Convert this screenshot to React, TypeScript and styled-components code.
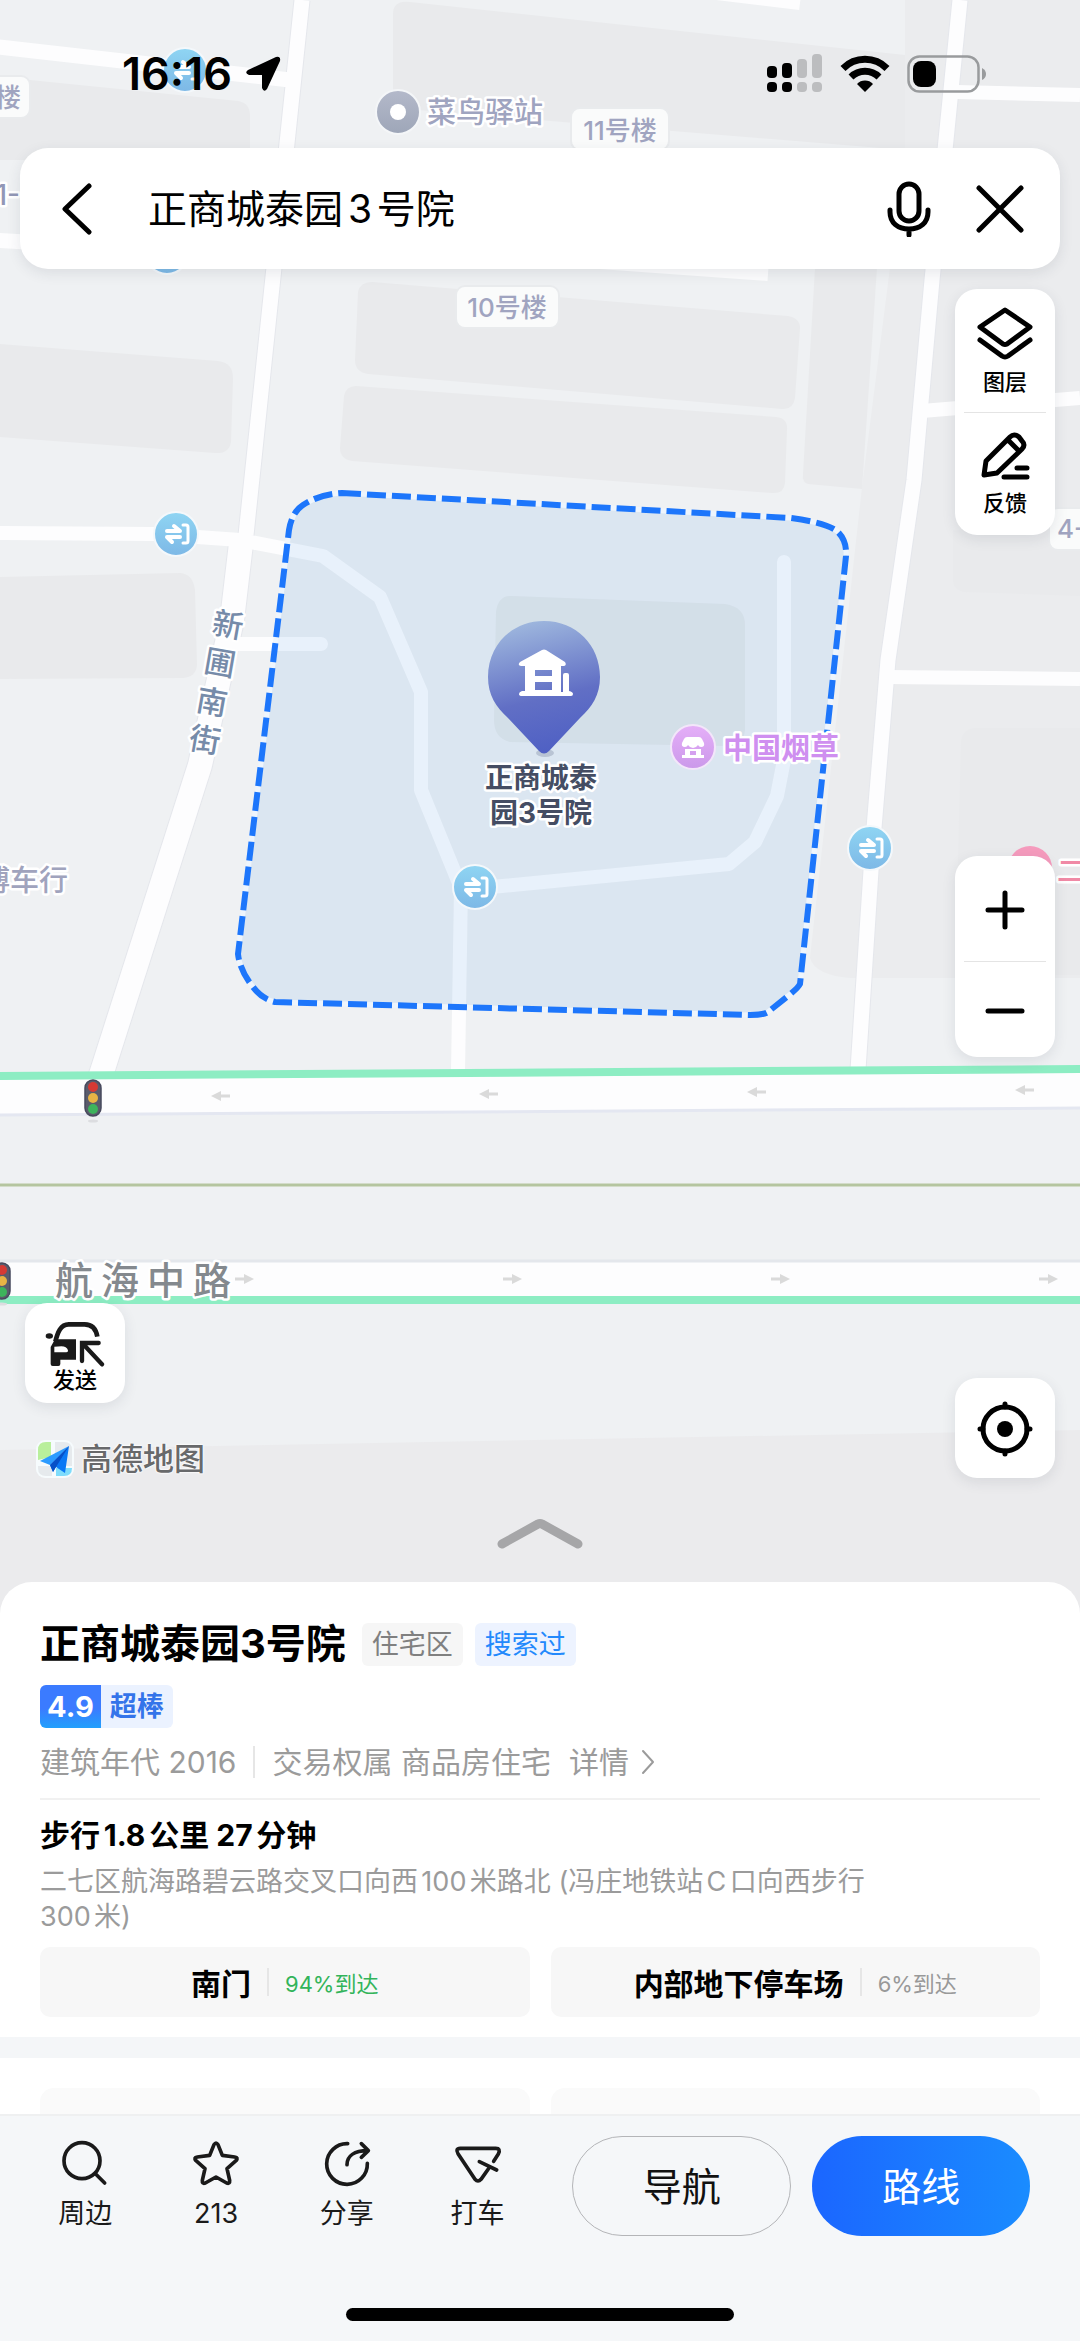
import React from "react";
import styled, { createGlobalStyle, css } from "styled-components";

const sans = `Inter, "Noto Sans CJK SC", "Liberation Sans", sans-serif`;

const GlobalStyle = createGlobalStyle`
  * { box-sizing: border-box; }
  body {
    margin: 0;
    font-family: ${sans};
    color: #000;
    background: #f5f7f9;
    text-autospace: normal;
  }
  button, input { font: inherit; color: inherit; }
`;

const Screen = styled.div`
  display: flex;
  flex-direction: column;
  min-height: 100vh;
`;

/* ---------- map ---------- */

const MapArea = styled.section`
  position: relative;
  flex: 1;
  display: flex;
  flex-direction: column;
  padding-bottom: 32px;
  overflow: hidden;
  background: #eff1f3;
`;

const MapCanvas = styled.svg`
  position: absolute;
  inset: 0;
  width: 100%;
  height: 100%;
  font-family: ${sans};
  text-autospace: no-autospace;
`;

const Overlay = styled.div`
  position: relative;
  flex: 1;
  display: flex;
  flex-direction: column;
`;

const MapLabel = styled.text<{ $color: string; $size?: number; $weight?: number }>`
  fill: ${(p) => p.$color};
  font-size: ${(p) => p.$size ?? 28}px;
  font-weight: ${(p) => p.$weight ?? 500};
  paint-order: stroke;
  stroke: #fff;
  stroke-width: 5px;
  stroke-linejoin: round;
`;

const ChipLabel = styled.text`
  fill: #a0a4c0;
  font-size: 26px;
  font-weight: 500;
`;

const Gate = ({ x, y }: { x: number; y: number }) => (
  <g transform={`translate(${x} ${y})`}>
    <circle r="22" fill="url(#gate)" stroke="#f4f8fb" strokeWidth="2" />
    <g fill="none" stroke="#fff" strokeWidth="4" strokeLinecap="round" strokeLinejoin="round">
      <path d="M-9 -3H4L-2 -8M4 3H-9L-4 8" />
      <path d="M7 -9H10Q12 -9 12 -7V7Q12 9 10 9H7" strokeWidth="3" />
    </g>
  </g>
);

const Arrow = ({ x, y, flip }: { x: number; y: number; flip?: boolean }) => (
  <g transform={`translate(${x} ${y}) scale(${flip ? -1 : 1} 1)`} fill="#dadada">
    <rect x="-9" y="-1.5" width="12" height="3" />
    <path d="M0 -5L10 0L0 5Z" />
  </g>
);

const TrafficLight = ({ x, y }: { x: number; y: number }) => (
  <g transform={`translate(${x} ${y})`}>
    <ellipse cy="23" rx="5" ry="1.5" fill="#dcdde0" />
    <rect x="-8" y="-18" width="16" height="36" rx="8" fill="#5a5c6c" stroke="#47495d" strokeWidth="1.5" />
    <circle cy="-11" r="5" fill="#d63a34" />
    <circle r="5" fill="#e8b445" />
    <circle cy="11" r="5" fill="#3db35c" />
  </g>
);

const Chip = ({ x, y, w }: { x: number; y: number; w: number }) => (
  <rect x={x} y={y} width={w} height="42" rx="9" fill="#fafbfb" stroke="#e9ebed" strokeWidth="2" />
);

const area =
  "M342 493L791 518Q828 523 838 532Q847 541 846 556L800 984Q798 988 788 996L768 1012Q764 1015 750 1015L275 1002Q262 999 253 987Q240 971 238 954L289 530Q292 512 303 505Q320 494 342 493Z";

function CityMap() {
  return (
    <MapCanvas viewBox="0 0 1080 1614" preserveAspectRatio="xMidYMid slice" role="img" aria-label="地图">
      <defs>
        <linearGradient id="gate" x1="0" y1="0" x2="0" y2="1">
          <stop offset="0" stopColor="#8fd5f3" />
          <stop offset="1" stopColor="#7db8e6" />
        </linearGradient>
        <linearGradient id="pin" x1="0.3" y1="0" x2="0.5" y2="1">
          <stop offset="0" stopColor="#9fb8de" />
          <stop offset="0.6" stopColor="#616fc5" />
          <stop offset="1" stopColor="#4f60c4" />
        </linearGradient>
        <linearGradient id="shop" x1="0" y1="0" x2="0" y2="1">
          <stop offset="0" stopColor="#e5aff8" />
          <stop offset="1" stopColor="#cb98ea" />
        </linearGradient>
        <linearGradient id="grey" x1="0" y1="0" x2="0" y2="1">
          <stop offset="0" stopColor="#b4b9ca" />
          <stop offset="1" stopColor="#9ea6b8" />
        </linearGradient>
      </defs>

      {/* land */}
      <rect width="1080" height="1614" fill="#eff1f3" />
      <path d="M905 0H1080V978H850Q815 975 810 958L862 487L905 150Z" fill="#ebecee" />
      <path d="M0 1450L1080 1430V1614H0Z" fill="#ebebed" />

      {/* buildings */}
      <g fill="#e9eaec">
        <path d="M393 14Q393 0 410 2L905 55V150L393 108Z" />
        <path d="M0 77L238 101Q250 103 250 116V160H0Z" />
        <path d="M0 344L218 361Q233 363 233 378L231 442Q229 454 215 453L0 437Z" />
        <path d="M0 577L180 573Q193 574 195 590L197 665Q196 677 183 678L0 679Z" />
        <path d="M358 292Q360 282 372 282L788 316Q800 318 800 328L795 398Q793 410 782 409L368 374Q355 372 355 360Z" />
        <path d="M344 396Q346 386 356 386L776 417Q788 418 787 430L785 483Q784 494 772 493L352 461Q340 459 340 448Z" />
        <path d="M815 268H877L862 489L808 484Q802 482 803 474Z" />
        <path d="M953 530H1080V596L965 592Q953 590 953 580ZM975 728H1080V975H955L961 742Q962 729 975 728Z" />
        <path d="M496 612Q498 595 512 596L725 604Q745 607 745 625V730Q743 747 728 746L510 742Q494 738 494 720Z" fill="#e6e9ea" />
      </g>

      {/* streets */}
      <g fill="none" strokeLinejoin="round">
        <g stroke="#e5e7ec">
          <path d="M302 0L246 535" strokeWidth="17" />
          <path d="M242 535L232 620L200 765L100 1078" strokeWidth="26" />
          <path d="M960 0L932 280L914 480L888 660L873 840L858 1070" strokeWidth="17" />
        </g>
        <g stroke="#fdfdfe">
          <path d="M-10 46L290 80M-10 240L200 252" strokeWidth="15" />
          <path d="M700 -9L800 3M600 262L768 274" strokeWidth="14" />
          <path d="M302 0L246 535" strokeWidth="15" />
          <path d="M242 535L232 620L200 765L100 1078" strokeWidth="24" />
          <path d="M960 0L932 280L914 480L888 660L873 840L858 1070" strokeWidth="15" />
          <path d="M957 92L1080 95M922 411L1080 398M886 677L1080 679" strokeWidth="14" />
          <path d="M0 533L155 534L240 540L323 556L380 597L421 692V790L461 888L458 1072" strokeWidth="14" />
          <path d="M461 890L729 864L755 842L777 796L784 760V562M228 644H321" strokeWidth="14" strokeLinecap="round" />
        </g>
      </g>

      {/* community boundary */}
      <path d={area} fill="rgba(20,120,225,0.09)" />
      <path d={area} fill="none" stroke="#eef5fd" strokeWidth="5" />
      <path d={area} fill="none" stroke="#1d76fb" strokeWidth="6" strokeDasharray="19 6" />

      {/* main road */}
      <path d="M0 1114L1080 1108V1073L0 1079Z" fill="#fdfdfe" />
      <path d="M0 1115L1080 1108" stroke="#e4e7f1" strokeWidth="3" />
      <path d="M0 1076L1080 1069" stroke="#8dedc3" strokeWidth="8" />
      <path d="M0 1185H1080" stroke="#d3dcc9" strokeWidth="4" />
      <path d="M0 1185H1080" stroke="#b5c59f" strokeWidth="2" />
      <rect y="1262" width="1080" height="35" fill="#fdfdfe" />
      <path d="M0 1261H1080" stroke="#e4e7ec" strokeWidth="3" />
      <path d="M0 1300H1080" stroke="#8dedc3" strokeWidth="8" />
      {[221, 489, 757, 1025].map((x, i) => (
        <Arrow key={x} x={x} y={1096 - i * 2} flip />
      ))}
      {[244, 512, 780, 1048].map((x) => (
        <Arrow key={x} x={x} y={1279} />
      ))}
      <TrafficLight x={93} y={1098} />
      <TrafficLight x={2} y={1281} />

      <Gate x={185} y={70} />
      <Gate x={167} y={252} />
      <Gate x={176} y={534} />
      <Gate x={475} y={887} />
      <Gate x={870} y={848} />

      {/* points of interest */}
      <circle cx="398" cy="112" r="22" fill="url(#grey)" stroke="#f4f6f8" strokeWidth="2" />
      <circle cx="398" cy="112" r="8" fill="#fff" />
      <MapLabel x="427" y="123" $color="#9fa4c0" $size={29}>菜鸟驿站</MapLabel>
      <Chip x={571} y={108} w={98} />
      <ChipLabel x="620" y="140" textAnchor="middle">11号楼</ChipLabel>
      <Chip x={456} y={286} w={103} />
      <ChipLabel x="507" y="317" textAnchor="middle">10号楼</ChipLabel>
      <Chip x={-20} y={76} w={50} />
      <ChipLabel x="21" y="107" textAnchor="end">楼</ChipLabel>
      <MapLabel x="20" y="205" textAnchor="end" $color="#9297b6">1-</MapLabel>
      <Chip x={1049} y={508} w={60} />
      <ChipLabel x="1057" y="538">4-</ChipLabel>
      <circle cx="1030" cy="868" r="22" fill="#f59bbd" />
      <MapLabel x="1057" y="881" $color="#f08aa6">二七</MapLabel>
      <MapLabel x="68" y="891" textAnchor="end" $color="#a0a3bd" $size={29}>博车行</MapLabel>

      <circle cx="693" cy="747" r="22" fill="url(#shop)" stroke="#f3e6fa" strokeWidth="2" />
      <g fill="#fff">
        <path d="M687 737H699Q701 737 702 739L704 743Q705 747 701 747Q699 747 698 745Q696 748 693 748T688 745Q687 747 685 747Q681 747 682 743L684 739Q685 737 687 737Z" />
        <path d="M685 749H701V755H704V758H682V755H685ZM690 751V755H696V751Z" fillRule="evenodd" />
      </g>
      <MapLabel x="723" y="759" $color="#cf8ff0" $weight={700} $size={29}>中国烟草</MapLabel>

      <ellipse cx="545" cy="753" rx="9" ry="4" fill="#b9c4d4" />
      <path
        d="M544 621C576 621 600 645 600 677C600 695 592 707 580 718L549 751Q544 756 539 751L508 718C496 707 488 695 488 677C488 645 512 621 544 621Z"
        fill="url(#pin)"
      />
      <path
        d="M542 650Q544 649 546 650L565 662Q567 665 564 666H561V692H563V675Q563 673 565 673H567Q569 673 569 675V691Q573 692 573 694T571 696H522Q519 696 519 694T522 691H525V666H521Q517 665 520 662ZM535 670V676H552V670ZM535 682V690H552V682Z"
        fill="#fff"
        fillRule="evenodd"
      />
      <MapLabel x="541" y="788" textAnchor="middle" $color="#454d63" $weight={700}>正商城泰</MapLabel>
      <MapLabel x="541" y="823" textAnchor="middle" $color="#454d63" $weight={700}>园3号院</MapLabel>

      {/* road names */}
      {[
        ["新", 228, 625],
        ["圃", 220, 663],
        ["南", 212, 702],
        ["街", 205, 740],
      ].map(([c, x, y]) => (
        <g key={c} transform={`translate(${x} ${y}) rotate(10)`}>
          <MapLabel y="11" textAnchor="middle" $color="#768ba9" $size={31}>{c}</MapLabel>
        </g>
      ))}
      <MapLabel x="55 101 147 193" y="1294" $color="#84898e" $size={38}>航海中路</MapLabel>
    </MapCanvas>
  );
}

/* ---------- status bar and search ---------- */

const StatusBar = styled.div`
  display: flex;
  align-items: center;
  gap: 13px;
  height: 148px;
  padding: 0 93px 0 122px;
`;

const Clock = styled.time`
  font-size: 45px;
  font-weight: 600;
  line-height: 52px;
`;

const StatusIcons = styled.div`
  display: flex;
  align-items: center;
  gap: 17px;
  margin-left: auto;
`;

const floating = css`
  background: #fff;
  box-shadow: 0 4px 14px rgba(40, 50, 70, 0.1);
`;

const SearchBar = styled.form`
  ${floating}
  display: flex;
  align-items: center;
  height: 121px;
  margin: 0 20px;
  padding: 0 20px 0 16px;
  border-radius: 28px;
`;

const IconButton = styled.button`
  display: grid;
  place-items: center;
  width: 80px;
  height: 80px;
  flex: none;
  padding: 0;
  border: 0;
  background: none;
`;

const SearchInput = styled.input`
  flex: 1;
  min-width: 0;
  padding: 0 32px;
  border: 0;
  outline: 0;
  background: none;
  font-size: 39px;
  line-height: 56px;
`;

const SearchActions = styled.div`
  display: flex;
  gap: 11px;
`;

/* ---------- floating controls ---------- */

const Controls = styled.div`
  flex: 1;
  display: flex;
  justify-content: space-between;
  padding: 20px 25px 0;
`;

const LeftControls = styled.div`
  display: flex;
  flex-direction: column;
  justify-content: flex-end;
  gap: 37px;
`;

const RightControls = styled.div`
  display: flex;
  flex-direction: column;
  justify-content: space-between;
  gap: 40px;
`;

const ToolGroup = styled.div`
  ${floating}
  display: flex;
  flex-direction: column;
  width: 100px;
  padding: 0 9px;
  border-radius: 22px;
`;

const Tool = styled.button<{ $height: number }>`
  display: flex;
  flex-direction: column;
  align-items: center;
  justify-content: center;
  gap: 6px;
  height: ${(p) => p.$height}px;
  padding: 2px 0 0;
  border: 0;
  background: none;
  font-size: 22px;
  font-weight: 500;
  line-height: 30px;
  white-space: nowrap;
  & + & {
    border-top: 1px solid #e4e4e4;
  }
`;

const SendTool = styled(Tool)`
  gap: 0;
  padding-top: 5px;
  line-height: 24px;
`;

const Brand = styled.div`
  display: flex;
  align-items: center;
  gap: 7px;
  height: 38px;
  padding-left: 11px;
  color: #68696b;
  font-size: 31px;
  font-weight: 500;
  line-height: 38px;
  text-shadow: 0 0 2px #fff, 0 0 2px #fff, 0 0 3px #fff;
`;

const Expand = styled.button`
  display: grid;
  place-items: center;
  height: 104px;
  padding: 5px 0 0;
  border: 0;
  background: none;
`;

/* ---------- detail sheet ---------- */

const Sheet = styled.main`
  position: relative;
  margin-top: -32px;
  border-radius: 32px 32px 0 0;
  background: #fff;
`;

const Section = styled.section`
  padding: 36px 40px 20px;
`;

const TitleRow = styled.div`
  display: flex;
  align-items: center;
  gap: 12px;
  height: 52px;
`;

const Title = styled.h1`
  margin: 0 4px 0 0;
  font-size: 40px;
  font-weight: 700;
  line-height: 52px;
  text-autospace: no-autospace;
`;

const Tag = styled.span<{ $blue?: boolean }>`
  padding: 0 10px;
  border-radius: 6px;
  font-size: 27px;
  line-height: 43px;
  color: ${(p) => (p.$blue ? "#2389fc" : "#808080")};
  background: ${(p) => (p.$blue ? "#edf3ff" : "#f6f6f6")};
`;

const Rating = styled.div`
  display: inline-flex;
  margin-top: 15px;
  overflow: hidden;
  border-radius: 6px;
  background: #ebf2ff;
  font-size: 27px;
  font-weight: 700;
  line-height: 43px;
`;

const Score = styled.span`
  padding: 0 7px;
  color: #fff;
  background: linear-gradient(180deg, #3b7bff 55%, #22a0fc);
  font-size: 29px;
`;

const Verdict = styled.span`
  padding: 0 9px;
  color: #3474ea;
`;

const Facts = styled.div`
  display: flex;
  align-items: center;
  height: 40px;
  margin-top: 14px;
  color: #9b9b9b;
  font-size: 30px;
  line-height: 40px;
  white-space: nowrap;
`;

const Separator = styled.i<{ $height: number; $gap: number }>`
  width: 2px;
  height: ${(p) => p.$height}px;
  margin: 0 ${(p) => p.$gap}px;
  background: #e6e6e6;
`;

const DetailLink = styled.a`
  display: flex;
  align-items: center;
  gap: 12px;
  margin-left: 18px;
  color: inherit;
  text-decoration: none;
`;

const Rule = styled.hr`
  height: 2px;
  margin: 16px 0 15px;
  border: 0;
  background: #f1f1f1;
`;

const Walk = styled.p`
  margin: 0;
  font-size: 30px;
  font-weight: 700;
  line-height: 40px;
`;

const Address = styled.p`
  max-width: 860px;
  margin: 9px 0 0;
  color: #9b9b9b;
  font-size: 27px;
  line-height: 35px;
`;

const Pair = styled.div`
  display: grid;
  grid-template-columns: 1fr 1fr;
  gap: 21px;
`;

const Entrances = styled(Pair)`
  margin-top: 13px;
`;

const Entrance = styled.button`
  display: flex;
  align-items: center;
  justify-content: center;
  height: 70px;
  padding: 0;
  border: 0;
  border-radius: 10px;
  background: #f7f7f7;
  font-size: 30px;
  font-weight: 700;
`;

const Share = styled.span<{ $main?: boolean }>`
  color: ${(p) => (p.$main ? "#32b45a" : "#999")};
  font-size: 22px;
  font-weight: 400;
`;

const Band = styled.div`
  height: 21px;
  background: #f4f6f8;
`;

const NextCards = styled(Pair)`
  padding: 30px 40px 0;
`;

const NextCard = styled.div`
  height: 26px;
  border-radius: 14px 14px 0 0;
  background: #fafafa;
`;

/* ---------- bottom bar ---------- */

const BottomBar = styled.footer`
  display: flex;
  flex-direction: column;
  align-items: center;
  padding-bottom: 20px;
  border-top: 2px solid #eff0f1;
  background: #f5f7f9;
`;

const Actions = styled.nav`
  display: flex;
  align-items: center;
  width: 100%;
  gap: 21px;
  padding: 20px 50px 72px 20px;
`;

const Tabs = styled.div`
  flex: 524 1 0;
  display: grid;
  grid-template-columns: repeat(4, 1fr);
  margin-right: 8px;
`;

const Tab = styled.button`
  display: flex;
  flex-direction: column;
  align-items: center;
  gap: 8px;
  padding: 0;
  border: 0;
  background: none;
  color: #1a1a1a;
  font-size: 27px;
  line-height: 38px;
`;

const Pill = styled.button<{ $primary?: boolean }>`
  flex: 218 1 0;
  height: 100px;
  padding: 0 0 4px;
  border: ${(p) => (p.$primary ? "0" : "1px solid #b4b5b8")};
  border-radius: 50px;
  color: ${(p) => (p.$primary ? "#fff" : "#111")};
  background: ${(p) => (p.$primary ? "linear-gradient(90deg, #1b66ff, #1a8cff)" : "none")};
  font-size: 39px;
`;

const HomeIndicator = styled.div`
  width: 36%;
  height: 13px;
  border-radius: 7px;
  background: #000;
`;

/* ---------- icons ---------- */

const StrokeIcon = styled.svg`
  display: block;
  fill: none;
  stroke: currentColor;
  stroke-linecap: round;
  stroke-linejoin: round;
`;

const Signal = () => (
  <svg width="56" height="40" viewBox="0 0 56 40" aria-hidden="true">
    {[0, 15, 30, 45].map((x, i) => {
      const h = [12, 15, 19, 24][i];
      return (
        <g key={x} fill={i < 2 ? "#000" : "#bcbdbf"}>
          <rect x={x} y={24 - h} width="10" height={h} rx="4" />
          <rect x={x} y="28" width="10" height="10" rx="4" />
        </g>
      );
    })}
  </svg>
);

const Wifi = () => (
  <svg width="50" height="38" viewBox="0 0 50 38" aria-hidden="true">
    <g fill="none" stroke="#000" strokeWidth="7">
      <path d="M3 13.5A31 31 0 0 1 47 13.5" />
      <path d="M11 22A20 20 0 0 1 39 22" />
    </g>
    <path d="M25 37L17 29A11 11 0 0 1 33 29Z" />
  </svg>
);

const Battery = () => (
  <svg width="80" height="38" viewBox="0 0 80 38" aria-hidden="true">
    <rect x="1.5" y="1.5" width="70" height="35" rx="11" fill="none" stroke="#999b9d" strokeWidth="2.5" />
    <path d="M75 13Q79 15 79 19T75 25Z" fill="#999b9d" />
    <rect x="6" y="6" width="23" height="26" rx="8" />
  </svg>
);

const tabs = [
  {
    label: "周边",
    box: "93 63 144 144",
    art: (
      <>
        <circle cx="156" cy="128" r="54" />
        <path d="M197 168L224 195" />
      </>
    ),
  },
  {
    label: "213",
    box: "486 63 144 144",
    art: (
      <path d="M552 80Q558 70 564 80L577 112L614 117Q626 119 618 128L591 152L599 187Q600 199 590 195L558 177L526 195Q516 199 517 187L525 152L498 128Q490 119 502 117L539 112Z" />
    ),
  },
  {
    label: "分享",
    box: "878 63 144 144",
    art: (
      <>
        <path d="M952 77A61 61 0 1 0 1011 136" />
        <path d="M950 140C950 114 972 98 1012 98M993 77L1014 98L993 118" />
      </>
    ),
  },
  {
    label: "打车",
    box: "1269 63 144 144",
    art: (
      <>
        <path d="M1388 130L1402 108Q1410 91 1394 91H1288Q1272 92 1281 107L1332 184Q1341 194 1350 184L1374 150" />
        <path d="M1345 131L1397 156" />
      </>
    ),
  },
];

export default function App() {
  return (
    <Screen>
      <GlobalStyle />
      <MapArea>
        <CityMap />
        <Overlay>
          <StatusBar>
            <Clock>16:16</Clock>
            <svg width="36" height="36" viewBox="0 0 36 36" aria-hidden="true">
              <path d="M31 1Q36 0 35 5L22 33Q19 37 17 32V19H4Q-1 17 3 14Z" />
            </svg>
            <StatusIcons>
              <Signal />
              <Wifi />
              <Battery />
            </StatusIcons>
          </StatusBar>

          <SearchBar onSubmit={(e) => e.preventDefault()}>
            <IconButton type="button" aria-label="返回">
              <StrokeIcon width="32" height="52" viewBox="0 0 32 52" strokeWidth="5">
                <path d="M29 3L5 26L29 49" />
              </StrokeIcon>
            </IconButton>
            <SearchInput aria-label="搜索" defaultValue="正商城泰园3号院" />
            <SearchActions>
              <IconButton type="button" aria-label="语音">
                <StrokeIcon width="44" height="56" viewBox="0 0 44 56" strokeWidth="5">
                  <rect x="12" y="3" width="20" height="37" rx="10" />
                  <path d="M3 29V31C3 42 11 48 22 48S41 42 41 31V29M22 48V54" />
                </StrokeIcon>
              </IconButton>
              <IconButton type="button" aria-label="关闭">
                <StrokeIcon width="48" height="48" viewBox="0 0 48 48" strokeWidth="5">
                  <path d="M3 3L45 45M45 3L3 45" />
                </StrokeIcon>
              </IconButton>
            </SearchActions>
          </SearchBar>

          <Controls>
            <LeftControls>
              <ToolGroup>
                <SendTool type="button" $height={100}>
                  <svg width="60" height="49" viewBox="75 50 180 147" aria-hidden="true" fill="#1a1a1a">
                    <path
                      d="M106 118C113 90 122 66 146 66H194C215 66 228 80 232 103"
                      fill="none"
                      stroke="#1a1a1a"
                      strokeWidth="14"
                    />
                    <ellipse cx="88" cy="101" rx="11" ry="8" />
                    <path
                      d="M92 134L105 111H168V172H121V185Q121 191 115 191H98Q92 191 92 185ZM103 133V150H139Q145 150 144 144Q140 132 124 132Z"
                      fillRule="evenodd"
                    />
                    <path
                      d="M236 122H186V176M190 126L246 186"
                      fill="none"
                      stroke="#1a1a1a"
                      strokeWidth="13"
                      strokeLinecap="round"
                    />
                  </svg>
                  发送
                </SendTool>
              </ToolGroup>
              <Brand>
                <svg width="38" height="38" viewBox="0 0 38 38" aria-hidden="true">
                  <rect width="38" height="38" rx="9" fill="#f6fbfd" />
                  <path d="M2 20V10Q2 2 10 2H15V17Z" fill="#b9ef9c" />
                  <path d="M19 2H28Q36 2 36 10V26H19Z" fill="#e6eaed" />
                  <path d="M20 36V28H36Q36 36 28 36Z" fill="#7fdcfb" />
                  <path d="M2 26H16V36H10Q2 36 2 28Z" fill="#e6eaed" />
                  <path d="M33 6L4 21L14 25Z" fill="#2b9bff" />
                  <path d="M33 6L14 25L17 32L20 27L29 33Z" fill="#0a78f5" />
                  <path d="M14 25L17 32L20 27L33 6Z" fill="#0650c8" />
                </svg>
                高德地图
              </Brand>
            </LeftControls>

            <RightControls>
              <ToolGroup>
                <Tool type="button" $height={123}>
                  <StrokeIcon width="58" height="54" viewBox="0 0 58 54" strokeWidth="5">
                    <path d="M29 3L54 20L31 37Q29 38 27 37L4 20Z" />
                    <path d="M4 33L26 49Q29 51 32 49L54 33" />
                  </StrokeIcon>
                  图层
                </Tool>
                <Tool type="button" $height={123}>
                  <StrokeIcon width="50" height="50" viewBox="0 0 50 50" strokeWidth="5">
                    <path d="M4 43L6 29L30 5Q34 1 39 5L42 9Q46 13 42 17L17 41ZM28 8L39 19M37 36H47M24 45H47" />
                  </StrokeIcon>
                  反馈
                </Tool>
              </ToolGroup>
              <ToolGroup>
                <Tool type="button" $height={105} aria-label="放大">
                  <StrokeIcon width="40" height="40" viewBox="0 0 40 40" strokeWidth="5">
                    <path d="M20 3V37M3 20H37" />
                  </StrokeIcon>
                </Tool>
                <Tool type="button" $height={96} aria-label="缩小">
                  <StrokeIcon width="40" height="40" viewBox="0 0 40 40" strokeWidth="5">
                    <path d="M3 20H37" />
                  </StrokeIcon>
                </Tool>
              </ToolGroup>
              <ToolGroup>
                <Tool type="button" $height={100} aria-label="定位">
                  <StrokeIcon width="58" height="58" viewBox="0 0 58 58" strokeWidth="5">
                    <circle cx="29" cy="29" r="22" />
                    <path d="M29 4V7M29 51V54M4 29H7M51 29H54" />
                    <circle cx="29" cy="29" r="8" fill="#000" stroke="none" />
                  </StrokeIcon>
                </Tool>
              </ToolGroup>
            </RightControls>
          </Controls>

          <Expand type="button" aria-label="展开">
            <StrokeIcon width="88" height="34" viewBox="0 0 88 34" strokeWidth="9" color="#a6a6a8">
              <path d="M6 28L42 8Q44 7 46 8L82 28" />
            </StrokeIcon>
          </Expand>
        </Overlay>
      </MapArea>

      <Sheet>
        <Section>
          <TitleRow>
            <Title>正商城泰园3号院</Title>
            <Tag>住宅区</Tag>
            <Tag $blue>搜索过</Tag>
          </TitleRow>
          <Rating>
            <Score>4.9</Score>
            <Verdict>超棒</Verdict>
          </Rating>
          <Facts>
            建筑年代 2016
            <Separator $height={32} $gap={17} />
            交易权属 商品房住宅
            <DetailLink href="#detail">
              详情
              <StrokeIcon width="14" height="26" viewBox="0 0 14 26" strokeWidth="2">
                <path d="M2 2L12 13L2 24" />
              </StrokeIcon>
            </DetailLink>
          </Facts>
          <Rule />
          <Walk>步行1.8公里 27分钟</Walk>
          <Address>二七区航海路碧云路交叉口向西100米路北 (冯庄地铁站C口向西步行300米)</Address>
          <Entrances>
            <Entrance type="button">
              南门
              <Separator $height={28} $gap={16} />
              <Share $main>94%到达</Share>
            </Entrance>
            <Entrance type="button">
              内部地下停车场
              <Separator $height={28} $gap={16} />
              <Share>6%到达</Share>
            </Entrance>
          </Entrances>
        </Section>
        <Band />
        <NextCards>
          <NextCard />
          <NextCard />
        </NextCards>
      </Sheet>

      <BottomBar>
        <Actions>
          <Tabs>
            {tabs.map((t) => (
              <Tab key={t.label} type="button">
                <StrokeIcon width="48" height="48" viewBox={t.box} strokeWidth="11">
                  {t.art}
                </StrokeIcon>
                {t.label}
              </Tab>
            ))}
          </Tabs>
          <Pill type="button">导航</Pill>
          <Pill type="button" $primary>路线</Pill>
        </Actions>
        <HomeIndicator />
      </BottomBar>
    </Screen>
  );
}
